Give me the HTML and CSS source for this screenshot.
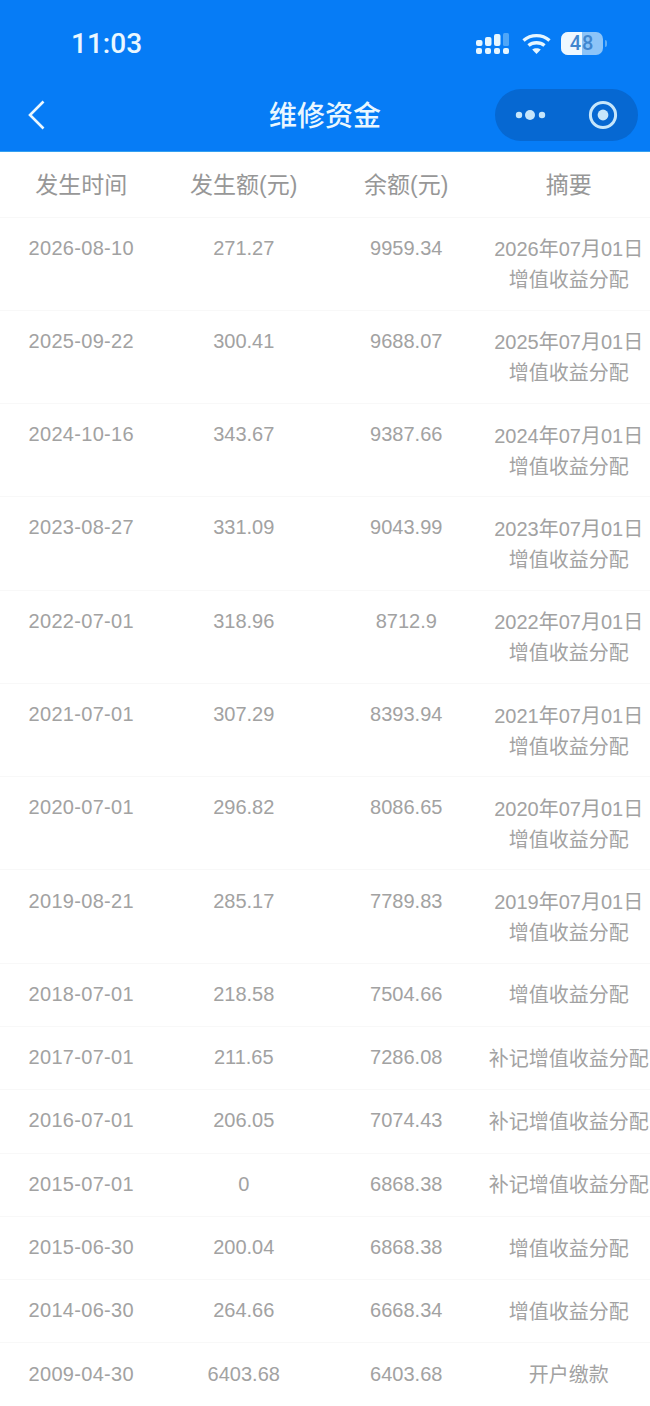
FILE: index.html
```html
<!DOCTYPE html>
<html lang="zh-CN">
<head>
    <meta charset="UTF-8" />
    <title>维修资金</title>
    <link rel="stylesheet" href="styles.css">
</head>
<body>

<header class="top">
    <div class="status">
        <span class="time">11:03</span>
        <div class="status-icons">
            <svg class="signal" width="33" height="22" viewBox="0 0 33 22">
                <rect x="0" y="7" width="6.5" height="6" rx="2" fill="#e6f6ff"/>
                <rect x="9" y="4" width="6.5" height="9" rx="2" fill="#e6f6ff"/>
                <rect x="18" y="1" width="6.5" height="12" rx="2" fill="#e6f6ff"/>
                <rect x="27" y="0" width="6" height="13" rx="1.5" fill="#4fa6f8"/>
                <rect x="0" y="15" width="6" height="6" rx="2" fill="#e6f6ff"/>
                <rect x="9" y="15" width="6" height="6" rx="2" fill="#e6f6ff"/>
                <rect x="18" y="15" width="6" height="6" rx="2" fill="#e6f6ff"/>
                <rect x="27" y="15" width="6" height="6" rx="2" fill="#e6f6ff"/>
            </svg>
            <svg class="wifi" width="29" height="21" viewBox="0 0 29 21" fill="none" stroke="#e6f6ff" stroke-width="3.4">
                <path d="M1.5 7.5C9 1 20 1 27.5 7.5"/>
                <path d="M6.5 12.5C11 8.8 18 8.8 22.5 12.5"/>
                <path d="M14.5 21L10.2 16.6C12.6 14.8 16.4 14.8 18.8 16.6Z" fill="#e6f6ff" stroke="none"/>
            </svg>
            <div class="battery"><span class="level"></span><span class="pct">48</span></div>
            <span class="battery-cap"></span>
        </div>
    </div>
    <nav class="nav">
        <svg class="back" width="18" height="30" viewBox="0 0 18 30" fill="none" stroke="#eaf7ff" stroke-width="2.6">
            <path d="M15.5 1.5L2 15L15.5 28.5"/>
        </svg>
        <h1 class="title">维修资金</h1>
        <div class="capsule">
            <svg width="32" height="12" viewBox="0 0 32 12">
                <circle cx="4" cy="6" r="3.2" fill="#c6e6fb"/>
                <circle cx="15" cy="6" r="5" fill="#c6e6fb"/>
                <circle cx="27" cy="6" r="3.2" fill="#c6e6fb"/>
            </svg>
            <svg width="30" height="30" viewBox="0 0 30 30">
                <circle cx="15" cy="15" r="12.6" fill="none" stroke="#c6e6fb" stroke-width="3"/>
                <circle cx="15" cy="15" r="5.4" fill="#c6e6fb"/>
            </svg>
        </div>
    </nav>
</header>

<table class="records">
    <thead>
        <tr><th>发生时间</th><th>发生额(元)</th><th>余额(元)</th><th>摘要</th></tr>
    </thead>
    <tbody>
        <tr><td class="date">2026-08-10</td><td>271.27</td><td>9959.34</td><td class="memo">2026年07月01日<br>增值收益分配</td></tr>
        <tr><td class="date">2025-09-22</td><td>300.41</td><td>9688.07</td><td class="memo">2025年07月01日<br>增值收益分配</td></tr>
        <tr><td class="date">2024-10-16</td><td>343.67</td><td>9387.66</td><td class="memo">2024年07月01日<br>增值收益分配</td></tr>
        <tr><td class="date">2023-08-27</td><td>331.09</td><td>9043.99</td><td class="memo">2023年07月01日<br>增值收益分配</td></tr>
        <tr><td class="date">2022-07-01</td><td>318.96</td><td>8712.9</td><td class="memo">2022年07月01日<br>增值收益分配</td></tr>
        <tr><td class="date">2021-07-01</td><td>307.29</td><td>8393.94</td><td class="memo">2021年07月01日<br>增值收益分配</td></tr>
        <tr><td class="date">2020-07-01</td><td>296.82</td><td>8086.65</td><td class="memo">2020年07月01日<br>增值收益分配</td></tr>
        <tr><td class="date">2019-08-21</td><td>285.17</td><td>7789.83</td><td class="memo">2019年07月01日<br>增值收益分配</td></tr>
        <tr><td class="date">2018-07-01</td><td>218.58</td><td>7504.66</td><td class="memo">增值收益分配</td></tr>
        <tr><td class="date">2017-07-01</td><td>211.65</td><td>7286.08</td><td class="memo">补记增值收益分配</td></tr>
        <tr><td class="date">2016-07-01</td><td>206.05</td><td>7074.43</td><td class="memo">补记增值收益分配</td></tr>
        <tr><td class="date">2015-07-01</td><td>0</td><td>6868.38</td><td class="memo">补记增值收益分配</td></tr>
        <tr><td class="date">2015-06-30</td><td>200.04</td><td>6868.38</td><td class="memo">增值收益分配</td></tr>
        <tr><td class="date">2014-06-30</td><td>264.66</td><td>6668.34</td><td class="memo">增值收益分配</td></tr>
        <tr><td class="date">2009-04-30</td><td>6403.68</td><td>6403.68</td><td class="memo">开户缴款</td></tr>
    </tbody>
</table>

</body>
</html>
```

FILE: styles.css
```css
body {
    margin: 0;
    background: #fff;
    font-family: "Liberation Sans", "Noto Sans CJK SC", sans-serif;
    overflow: hidden;
}

.top {
    height: 152px;
    background: #067cf6;
    color: #eaf7ff;
    box-sizing: border-box;
    border-bottom: 1px solid #35a0f0;
}

.status {
    height: 87px;
    display: flex;
    align-items: center;
    justify-content: space-between;
    padding: 0 43px 0 71px;
}

.time {
    font-size: 28px;
    font-weight: 500;
    font-family: Roboto, sans-serif;
}

.status-icons {
    display: flex;
    align-items: center;
}

.signal {
    margin-right: 13px;
}

.wifi {
    margin-right: 10px;
}

.battery {
    position: relative;
    width: 42px;
    height: 23px;
    background: #8cc4f8;
    border-radius: 7px;
    overflow: hidden;
}

.level {
    position: absolute;
    left: 0;
    top: 0;
    bottom: 0;
    width: 21px;
    background: #eef8ff;
}

.pct {
    position: absolute;
    left: 0;
    right: 0;
    text-align: center;
    font-size: 20px;
    line-height: 23px;
    font-weight: 500;
    font-family: Roboto, sans-serif;
    letter-spacing: 1px;
    color: #3f86cf;
}

.battery-cap {
    width: 2px;
    height: 7px;
    margin-left: 2px;
    background: #5fadf6;
    border-radius: 0 2px 2px 0;
}

.nav {
    height: 64px;
    position: relative;
    display: flex;
    align-items: center;
    justify-content: space-between;
    padding: 0 12px 8px 28px;
    box-sizing: border-box;
}

.title {
    position: absolute;
    left: 0;
    right: 0;
    top: 11px;
    margin: 0;
    text-align: center;
    font-size: 28px;
    line-height: 38px;
    font-weight: 500;
}

.capsule {
    width: 143px;
    height: 52px;
    box-sizing: border-box;
    padding: 0 20px;
    display: flex;
    align-items: center;
    justify-content: space-between;
    background: #0668d2;
    border-radius: 26px;
}

.records {
    width: 100%;
    border-collapse: collapse;
    table-layout: fixed;
    color: #a2a2a2;
    text-align: center;
}

.records th {
    height: 65px;
    padding: 0 0 3px;
    box-sizing: border-box;
    font-size: 23px;
    font-weight: 400;
    color: #979797;
    border-bottom: 1px solid #f8f8f8;
}

.records td {
    padding: 15.15px 0 17.15px;
    font-size: 20px;
    line-height: 30px;
    vertical-align: top;
    border-bottom: 1px solid #f8f8f8;
}

.records td.date {
    letter-spacing: 0.3px;
}

.records td.memo {
    padding: 16.65px 0 13.65px;
    line-height: 31px;
    white-space: nowrap;
}
```
